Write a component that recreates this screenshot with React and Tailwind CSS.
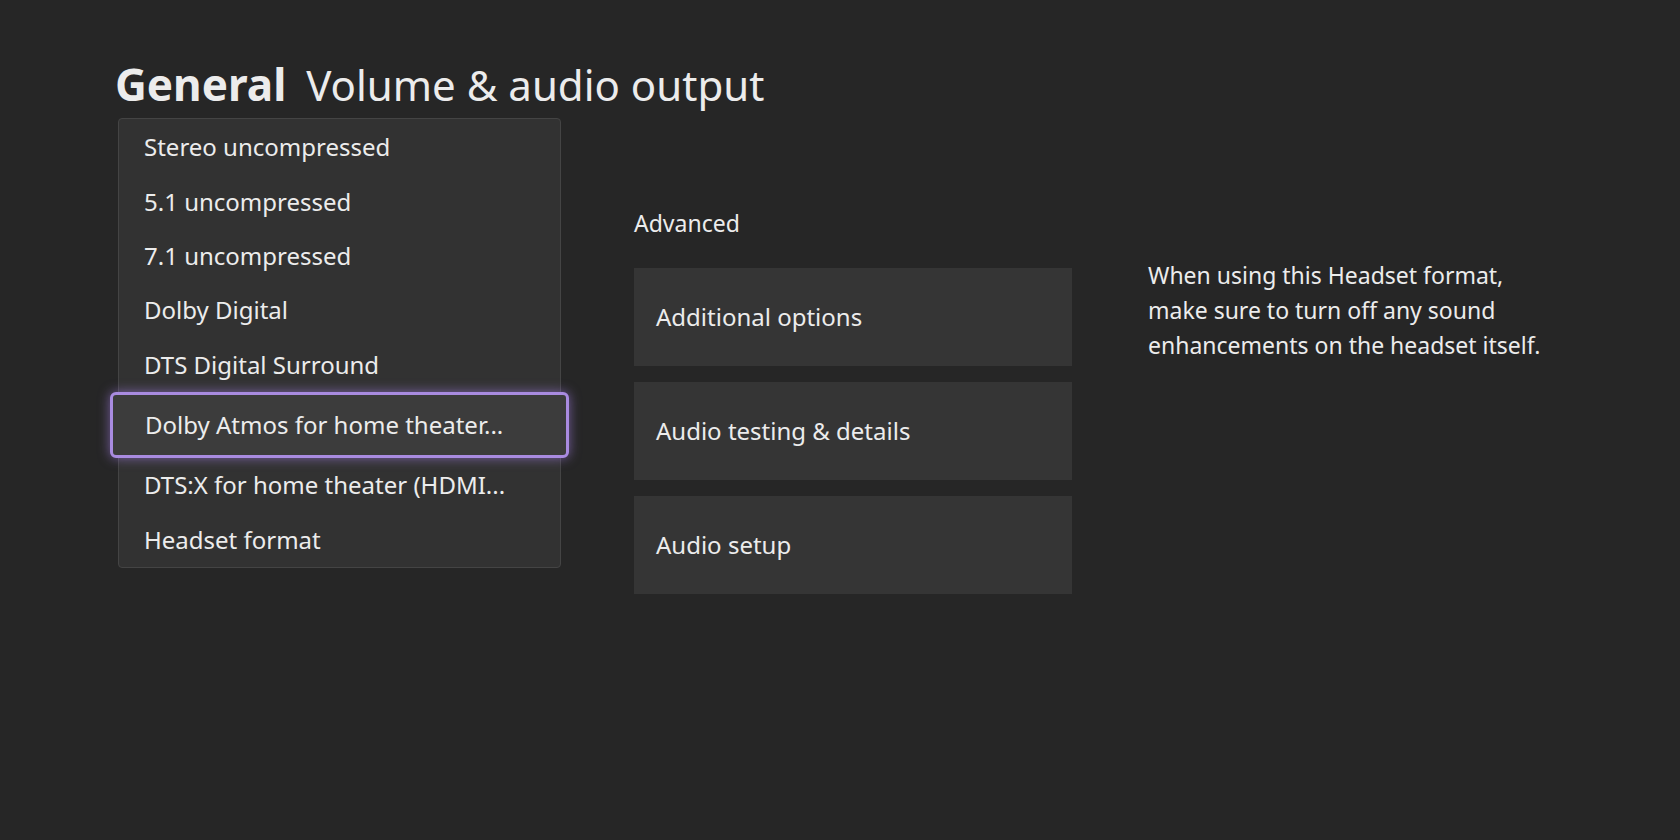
import React from 'react';

const options = [
  'Stereo uncompressed',
  '5.1 uncompressed',
  '7.1 uncompressed',
  'Dolby Digital',
  'DTS Digital Surround',
  'Dolby Atmos for home theater...',
  'DTS:X for home theater (HDMI...',
  'Headset format',
];

const cards = ['Additional options', 'Audio testing & details', 'Audio setup'];

const App = () => {
  return (
    <div style={{ fontFamily: "'Noto Sans', 'Open Sans', sans-serif" }} className="w-[1680px] h-[840px] bg-[#262626] text-[#ececec] overflow-hidden">
      <div className="pl-[115px] pt-[62px] flex items-baseline gap-5">
        <h1 className="text-[44px] font-bold leading-none">General</h1>
        <h2 className="text-[42px] leading-none">Volume &amp; audio output</h2>
      </div>
      <div className="flex mt-[12px]">
        <div className="ml-[118px] w-[443px] h-[450px] bg-[#323232] border border-[#444] rounded-sm flex flex-col pt-[1px]">
          {options.map((o, i) =>
            i === 5 ? (
              <div key={o} className="-mx-[9px] h-[68px] flex items-center px-[32px] bg-[#3c3c3c] border-[3px] border-[#a98be0] rounded-md shadow-[0_0_12px_rgba(170,130,240,0.6)] text-[24px]">
                {o}
              </div>
            ) : (
              <div key={o} className="h-[56px] flex items-center px-[25px] text-[24px]">
                {o}
              </div>
            )
          )}
        </div>
        <div className="ml-[73px] w-[438px] pt-[88px]">
          <div className="text-[23px] mb-[27px]">Advanced</div>
          <div className="flex flex-col gap-[16px]">
            {cards.map(c => (
              <div key={c} className="h-[98px] bg-[#353535] flex items-center px-[22px] text-[24px]">{c}</div>
            ))}
          </div>
        </div>
        <div className="ml-[76px] pt-[140px] w-[410px] text-[23px] leading-[35px]">
          When using this Headset format, make sure to turn off any sound enhancements on the headset itself.
        </div>
      </div>
    </div>
  );
};

export default App;
